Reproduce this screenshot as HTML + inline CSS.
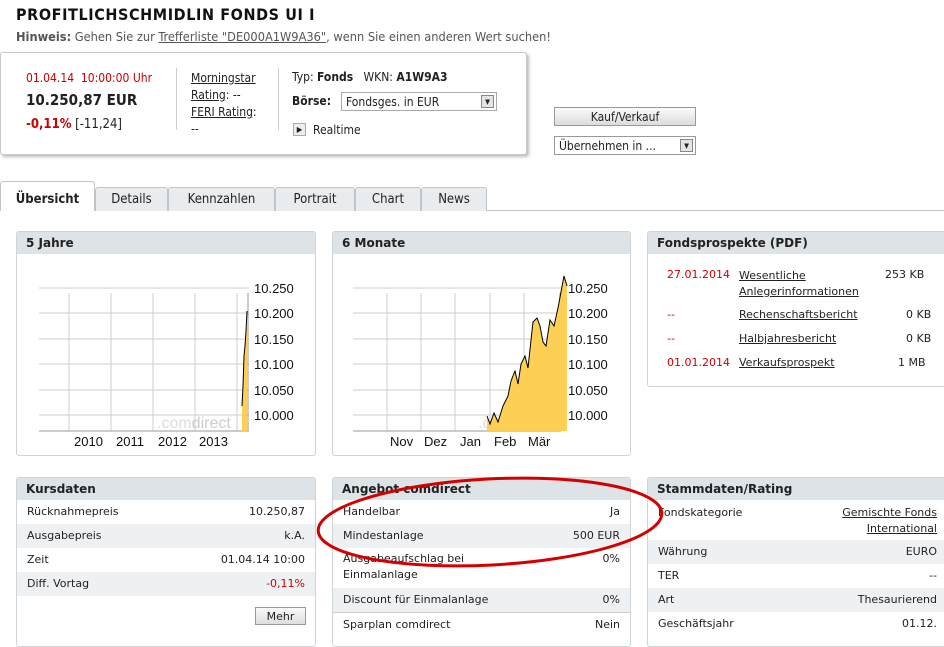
<!DOCTYPE html>
<html><head><meta charset="utf-8"><style>
*{margin:0;padding:0;box-sizing:border-box}
body{width:944px;height:630px;overflow:hidden;background:#fff;font-family:"DejaVu Sans Condensed","DejaVu Sans",sans-serif;font-size:12px;color:#222;position:relative}
.a{position:absolute;white-space:nowrap}
u{text-decoration:underline}
.red{color:#c00}
.box{position:absolute;border:1px solid #cfd4d7;border-radius:3px;background:#fff;overflow:hidden}
.hd{height:22px;background:#dde3e6;font-weight:bold;font-size:12px;padding:4px 9px;font-family:"DejaVu Sans",sans-serif}
.t{font-family:"DejaVu Sans",sans-serif;font-size:11px}
.row{height:24px;padding:5px 10px;display:flex;justify-content:space-between}
.g{background:#eef1f3}
.tab{position:absolute;top:187px;height:24px;border:1px solid #bfc6ca;border-bottom:none;background:#e8ecee;border-radius:3px 3px 0 0;font-size:13px;padding-top:4px;text-align:center}
.sel{background:#fff}
</style></head><body>
<div class="a" style="left:16px;top:5px;font-size:16px;font-weight:bold;color:#111;font-family:'DejaVu Sans Condensed',sans-serif;letter-spacing:0.6px">PROFITLICHSCHMIDLIN FONDS UI I</div>
<div class="a" style="left:16px;top:29px;color:#555;font-size:12.7px"><b>Hinweis:</b> Gehen Sie zur <u>Trefferliste "DE000A1W9A36"</u>, wenn Sie einen anderen Wert suchen!</div>
<div class="a" style="left:0;top:52px;width:527px;height:103px;border:1px solid #c8c8c8;border-radius:3px;box-shadow:2px 2px 3px #bbb;background:#fff"></div>
<div class="a red" style="left:26px;top:71px">01.04.14&nbsp; 10:00:00 Uhr</div>
<div class="a" style="left:26px;top:91px;font-size:15px;font-weight:bold">10.250,87 EUR</div>
<div class="a" style="left:26px;top:117px;font-size:13px"><b class="red">-0,11%</b> [-11,24]</div>
<div class="a" style="left:176px;top:68px;width:1px;height:62px;background:#ccc"></div>
<div class="a" style="left:191px;top:70px;line-height:17px"><u>Morningstar</u><br><u>Rating</u>: --<br><u>FERI Rating</u>:<br>--</div>
<div class="a" style="left:278px;top:68px;width:1px;height:62px;background:#ccc"></div>
<div class="a" style="left:292px;top:70px">Typ: <b>Fonds</b>&nbsp;&nbsp; WKN: <b>A1W9A3</b></div>
<div class="a" style="left:292px;top:94px"><b>Börse:</b></div>
<div class="a" style="left:341px;top:92px;width:156px;height:19px;border:1px solid #aaa;padding:2px 4px;font-size:12px">Fondsges. in EUR<span style="position:absolute;right:2px;top:2px;width:13px;height:13px;border:1px solid #888;background:#e4e4e4;font-size:7px;text-align:center;line-height:13px">▼</span></div>
<div class="a" style="left:293px;top:123px;width:13px;height:13px;border:1px solid #aaa;background:#eee;font-size:8px;text-align:center;line-height:12px">▶</div>
<div class="a" style="left:313px;top:123px">Realtime</div>
<div class="a" style="left:554px;top:107px;width:142px;height:19px;border:1px solid #999;background:linear-gradient(#fbfbfb,#dcdcdc);text-align:center;padding-top:2px">Kauf/Verkauf</div>
<div class="a" style="left:554px;top:136px;width:142px;height:19px;border:1px solid #999;padding:2px 4px">Übernehmen in ...<span style="position:absolute;right:2px;top:2px;width:13px;height:13px;border:1px solid #888;background:#e4e4e4;font-size:7px;text-align:center;line-height:13px">▼</span></div>
<div class="a" style="left:0;top:210px;width:944px;height:1px;background:#bfc6ca"></div>
<div class="tab sel" style="left:0;top:181px;width:95px;height:30px;padding-top:10px;font-weight:bold">Übersicht</div>
<div class="tab" style="left:95px;width:73px">Details</div>
<div class="tab" style="left:168px;width:107px">Kennzahlen</div>
<div class="tab" style="left:275px;width:80px">Portrait</div>
<div class="tab" style="left:355px;width:66px">Chart</div>
<div class="tab" style="left:421px;width:66px">News</div>

<div class="box" style="left:16px;top:231px;width:300px;height:225px"><div class="hd">5 Jahre</div>
<svg width="300" height="200" style="position:absolute;left:0;top:24px" font-family="Liberation Sans" font-size="13" fill="#111">
<g stroke="#ccc"><line x1="22" y1="32" x2="232" y2="32"/><line x1="22" y1="57" x2="232" y2="57"/><line x1="22" y1="83" x2="232" y2="83"/><line x1="22" y1="108" x2="232" y2="108"/><line x1="22" y1="134" x2="232" y2="134"/><line x1="22" y1="159" x2="232" y2="159"/>
<line x1="52" y1="37" x2="52" y2="175"/><line x1="94" y1="37" x2="94" y2="175"/><line x1="136" y1="37" x2="136" y2="175"/><line x1="178" y1="37" x2="178" y2="175"/><line x1="220" y1="37" x2="220" y2="175"/></g>
<line x1="22" y1="175" x2="232" y2="175" stroke="#999"/><line x1="231" y1="37" x2="231" y2="175" stroke="#999"/>
<text x="140" y="172" font-size="16" fill="#ddd">.com<tspan fill="#ccc">direct</tspan></text>
<path d="M225 175 L225 150 L226 130 L227 100 L228 90 L229 75 L230 70 L230 175Z" fill="#fdd055"/>
<path d="M225 150 L226 130 L227 100 L228 90 L229 75 L230 55" stroke="#000" fill="none"/>
<text x="237" y="37">10.250</text><text x="237" y="62">10.200</text><text x="237" y="88">10.150</text><text x="237" y="113">10.100</text><text x="237" y="139">10.050</text><text x="237" y="164">10.000</text>
<text x="57" y="190">2010</text><text x="99" y="190">2011</text><text x="141" y="190">2012</text><text x="182" y="190">2013</text>
</svg></div>

<div class="box" style="left:332px;top:231px;width:299px;height:225px"><div class="hd">6 Monate</div>
<svg width="300" height="200" style="position:absolute;left:0;top:24px" font-family="Liberation Sans" font-size="13" fill="#111">
<g stroke="#ccc"><line x1="20" y1="32" x2="228" y2="32"/><line x1="20" y1="57" x2="228" y2="57"/><line x1="20" y1="83" x2="228" y2="83"/><line x1="20" y1="108" x2="228" y2="108"/><line x1="20" y1="134" x2="228" y2="134"/><line x1="20" y1="159" x2="228" y2="159"/>
<line x1="54" y1="37" x2="54" y2="175"/><line x1="88" y1="37" x2="88" y2="175"/><line x1="122" y1="37" x2="122" y2="175"/><line x1="157" y1="37" x2="157" y2="175"/><line x1="191" y1="37" x2="191" y2="175"/></g>
<line x1="20" y1="175" x2="228" y2="175" stroke="#999"/><line x1="227" y1="37" x2="227" y2="175" stroke="#999"/>
<text x="145" y="172" font-size="16" fill="#ddd">.com<tspan fill="#ccc">direct</tspan></text>
<path d="M154 160 L157 168 L161 157 L165 166 L170 150 L175 140 L178 125 L182 115 L185 128 L188 108 L192 100 L195 112 L198 84 L200 66 L204 62 L207 70 L210 86 L213 90 L217 64 L221 70 L225 52 L228 36 L231 20 L234 30 L234 175 L154 175Z" fill="#fdd055"/>
<path d="M154 160 L157 168 L161 157 L165 166 L170 150 L175 140 L178 125 L182 115 L185 128 L188 108 L192 100 L195 112 L198 84 L200 66 L204 62 L207 70 L210 86 L213 90 L217 64 L221 70 L225 52 L228 36 L231 20 L234 30" stroke="#000" fill="none"/>
<text x="235" y="37">10.250</text><text x="235" y="62">10.200</text><text x="235" y="88">10.150</text><text x="235" y="113">10.100</text><text x="235" y="139">10.050</text><text x="235" y="164">10.000</text>
<text x="57" y="190">Nov</text><text x="91" y="190">Dez</text><text x="127" y="190">Jan</text><text x="161" y="190">Feb</text><text x="195" y="190">Mär</text>
</svg></div>

<div class="box t" style="left:647px;top:231px;width:310px;height:156px"><div class="hd">Fondsprospekte (PDF)</div>
<div class="a red" style="left:19px;top:36px">27.01.2014</div><div class="a" style="left:91px;top:36px;line-height:16px"><u>Wesentliche</u><br><u>Anlegerinformationen</u></div><div class="a" style="left:237px;top:36px">253 KB</div>
<div class="a red" style="left:19px;top:76px">--</div><div class="a" style="left:91px;top:76px"><u>Rechenschaftsbericht</u></div><div class="a" style="left:258px;top:76px">0 KB</div>
<div class="a red" style="left:19px;top:100px">--</div><div class="a" style="left:91px;top:100px"><u>Halbjahresbericht</u></div><div class="a" style="left:258px;top:100px">0 KB</div>
<div class="a red" style="left:19px;top:124px">01.01.2014</div><div class="a" style="left:91px;top:124px"><u>Verkaufsprospekt</u></div><div class="a" style="left:250px;top:124px">1 MB</div>
</div>

<div class="box t" style="left:16px;top:477px;width:300px;height:170px"><div class="hd">Kursdaten</div>
<div class="row"><span>Rücknahmepreis</span><span>10.250,87</span></div>
<div class="row g"><span>Ausgabepreis</span><span>k.A.</span></div>
<div class="row"><span>Zeit</span><span>01.04.14 10:00</span></div>
<div class="row g"><span>Diff. Vortag</span><span class="red">-0,11%</span></div>
<div class="a" style="left:238px;top:129px;width:51px;height:18px;border:1px solid #999;background:linear-gradient(#fafafa,#ddd);text-align:center;padding-top:2px">Mehr</div>
</div>

<div class="box t" style="left:332px;top:477px;width:299px;height:170px"><div class="hd">Angebot comdirect</div>
<div class="row"><span>Handelbar</span><span>Ja</span></div>
<div class="row g"><span>Mindestanlage</span><span>500 EUR</span></div>
<div class="row" style="height:40px;line-height:16px;padding-top:3px"><span>Ausgabeaufschlag bei<br>Einmalanlage</span><span>0%</span></div>
<div class="row g"><span>Discount für Einmalanlage</span><span>0%</span></div>
<div class="row" style="border-top:1px solid #ccc"><span>Sparplan comdirect</span><span>Nein</span></div>
</div>

<div class="box t" style="left:647px;top:477px;width:310px;height:170px"><div class="hd">Stammdaten/Rating</div>
<div class="row" style="height:40px;line-height:16px;padding-right:19px"><span>Fondskategorie</span><span style="text-align:right"><u>Gemischte Fonds</u><br><u>International</u></span></div>
<div class="row g" style="padding-right:19px"><span>Währung</span><span>EURO</span></div>
<div class="row" style="padding-right:19px"><span>TER</span><span>--</span></div>
<div class="row g" style="padding-right:19px"><span>Art</span><span>Thesaurierend</span></div>
<div class="row" style="padding-right:19px"><span>Geschäftsjahr</span><span>01.12.</span></div>
</div>

<svg class="a" style="left:300px;top:470px" width="380" height="110"><ellipse cx="190" cy="52" rx="172" ry="43" fill="none" stroke="#d40000" stroke-width="3" transform="rotate(-3 190 52)"/></svg>
</body></html>
